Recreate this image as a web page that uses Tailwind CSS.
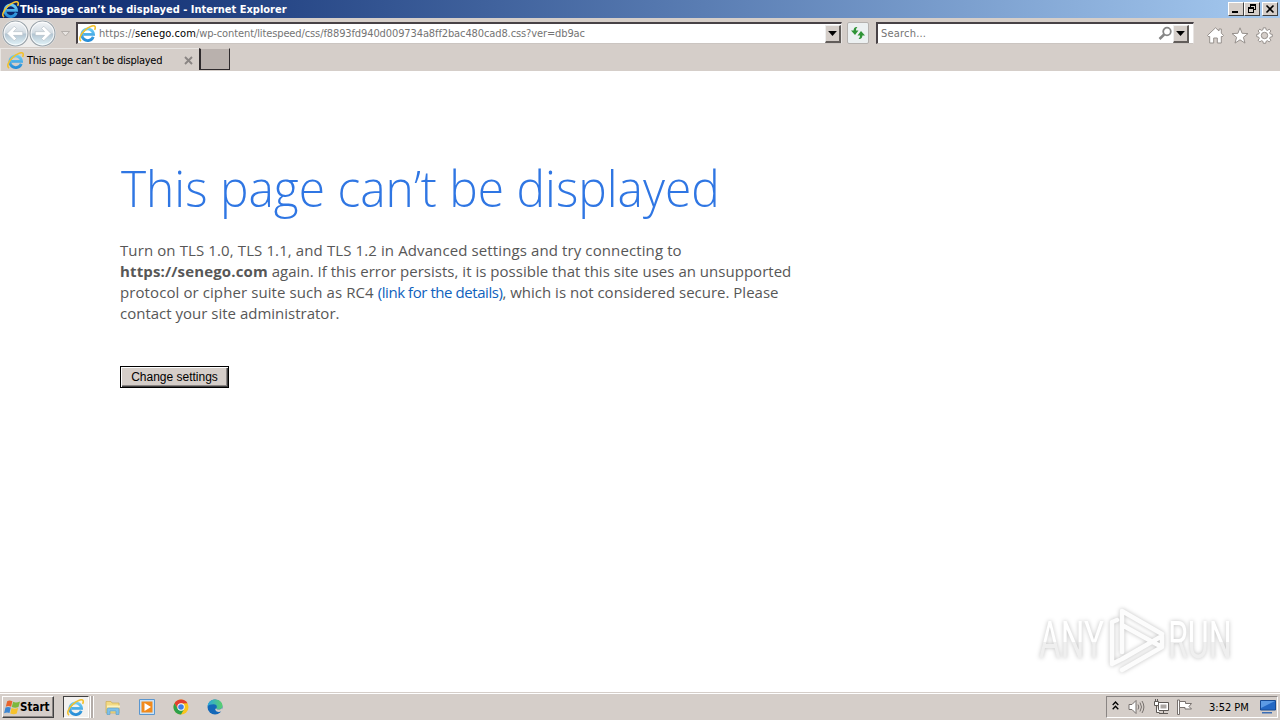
<!DOCTYPE html>
<html lang="en">
<head>
<meta charset="utf-8">
<title>This page can’t be displayed</title>
<script src="https://cdn.jsdelivr.net/npm/@tailwindcss/browser@4"></script>
</head>
<body class="w-[1280px] h-[720px] overflow-hidden flex flex-col bg-white font-['DejaVu_Sans_Condensed','DejaVu_Sans',sans-serif] text-[11px] text-black">
<svg class="absolute w-0 h-0">
  <defs>
    <linearGradient id="ieb" gradientUnits="userSpaceOnUse" x1="0" y1="3" x2="0" y2="14"><stop offset="0" stop-color="#6fd0f7"/><stop offset="1" stop-color="#2a8fd8"/></linearGradient>
    <linearGradient id="glass" x1="0" y1="0" x2="0" y2="1"><stop offset="0" stop-color="#f4f6f8"/><stop offset=".48" stop-color="#d3dce3"/><stop offset=".52" stop-color="#b3c5d2"/><stop offset="1" stop-color="#e4f5fa"/></linearGradient>
    <symbol id="ie" viewBox="0 0 16 16">
      <path d="M13.400 11A5.500 5.500 0 1 1 13.700 8.800H4.200" fill="none" stroke="url(#ieb)" stroke-width="2.600"/>
      <path d="M2 15C-.8 14 1.400 8.600 5.400 5 9.400 1.200 14.400-.4 15.200 1.600c.3.900 0 2-.5 2.900" fill="none" stroke="#f2c12e" stroke-width="1.500"/>
    </symbol>
    <symbol id="navarrow" viewBox="0 0 26 26">
      <circle cx="13" cy="13" r="12" fill="url(#glass)" stroke="#98a1a8" stroke-width="1.100"/>
      <circle cx="13" cy="13" r="10.900" fill="none" stroke="#fff" stroke-opacity=".8"/>
      <path d="M4.800 13l7-7 2.200 2.200-3 3h9v3.600h-9l3 3-2.200 2.200z" fill="#fff" stroke="#b4bec6" stroke-width=".6"/>
    </symbol>
  </defs>
</svg>

<header class="h-[71px] shrink-0 bg-[#d5cec9] flex flex-col">
  <div class="h-[18px] shrink-0 flex items-center bg-linear-to-r from-[#0a246a] to-[#a6caf0] pl-[2px] pr-[2px]">
    <svg class="w-[17px] h-[17px] shrink-0"><use href="#ie"/></svg>
    <span class="ml-px mt-px font-bold text-white whitespace-nowrap leading-[17px]">This page can’t be displayed - Internet Explorer</span>
    <div class="ml-auto flex">
      <div class="w-[16px] h-[14px] bg-[#d5cec9] border border-t-white border-l-white border-r-[#404040] border-b-[#404040]"><svg class="w-[14px] h-3" viewBox="0 0 14 12"><path d="M3 8h6v2H3z"/></svg></div>
      <div class="w-[16px] h-[14px] bg-[#d5cec9] border border-t-white border-l-white border-r-[#404040] border-b-[#404040]"><svg class="w-[14px] h-3" viewBox="0 0 14 12" shape-rendering="crispEdges"><path d="M5 1h6v6H9V6h1V3H6v1H5zM3 4h6v6H3zM4 6v3h4V6z" fill-rule="evenodd"/></svg></div>
      <div class="ml-[2px] w-[16px] h-[14px] bg-[#d5cec9] border border-t-white border-l-white border-r-[#404040] border-b-[#404040]"><svg class="w-[14px] h-3" viewBox="0 0 14 12"><path d="M3.500 2.500l7 7M10.500 2.500l-7 7" stroke="#000" stroke-width="1.600"/></svg></div>
    </div>
  </div>

  <div class="h-[30px] shrink-0 flex items-start pl-[2px]">
    <div class="w-[54px] h-[27px] mt-[2px] flex rounded-full bg-[#eeedec]">
      <svg class="w-[27px] h-[27px]"><use href="#navarrow"/></svg>
      <svg class="w-[27px] h-[27px] -scale-x-100"><use href="#navarrow"/></svg>
    </div>
    <svg class="w-[9px] h-[6px] ml-[5px] mt-[13px]" viewBox="0 0 9 6"><path d="M.5.500h8l-4 4.500z" fill="#e8e4e1" stroke="#aaa4a0" stroke-width=".8"/></svg>
    <div class="ml-[6px] mt-[4px] w-[766px] h-[22px] bg-white border-t-2 border-l-2 border-t-[#484246] border-l-[#484246] border-r border-b border-r-[#e8e4e2] border-b-[#cbc5c1] flex items-center">
      <svg class="ml-px w-[17px] h-[17px] shrink-0"><use href="#ie"/></svg>
      <span class="ml-[3px] mt-[2px] text-[#747474] whitespace-nowrap tracking-[-0.11px]"><span class="tracking-[0.05px]">https://<span class="text-black tracking-[0.1px]">senego.com</span></span>/wp-content/litespeed/css/f8893fd940d009734a8ff2bac480cad8.css?ver=db9ac</span>
      <div class="ml-auto w-[16px] h-[18px] bg-[#d5cec9] border border-t-[#eee] border-l-[#eee] border-r-2 border-b-2 border-r-[#625d5a] border-b-[#625d5a] flex items-center justify-center"><svg class="w-[9px] h-[5px]" viewBox="0 0 7 4"><path d="M0 0h7L3.500 4z"/></svg></div>
    </div>
    <div class="ml-[5px] mt-[4px] w-[22px] h-[22px] rounded-[2px] border border-[#b5b1ae] bg-[#ecf0f1] flex items-center justify-center">
      <svg class="w-4 h-4" viewBox="0 0 16 16" fill="#2f9436"><path d="M6.800 2C4.500 2.200 3.600 3.500 3.600 5.500H1L5 10l3.500-4.500H6C6 4 6.300 3.200 7.400 2.600z"/><path d="M9.200 14c2.300-.2 3.200-1.500 3.200-3.500H15L11 6 7.500 10.500H10c0 1.500-.3 2.300-1.400 2.900z"/></svg>
    </div>
    <div class="ml-[7px] mt-[4px] w-[318px] h-[22px] bg-white border-t-2 border-l-2 border-t-[#484246] border-l-[#484246] border-r border-b border-r-[#e8e4e2] border-b-[#cbc5c1] flex items-center">
      <span class="ml-[3px] mt-[2px] text-[#747474] tracking-[0.2px]">Search...</span>
      <svg class="ml-auto w-[15px] h-[15px]" viewBox="0 0 15 15" fill="none" stroke="#868686"><circle cx="9" cy="5.500" r="3.800" stroke-width="1.800"/><path d="M6.200 8.500L1.500 13" stroke-width="2.600"/></svg>
      <div class="mr-[4px] w-[16px] h-[18px] bg-[#d5cec9] border border-t-[#eee] border-l-[#eee] border-r-2 border-b-2 border-r-[#625d5a] border-b-[#625d5a] flex items-center justify-center"><svg class="w-[9px] h-[5px]" viewBox="0 0 7 4"><path d="M0 0h7L3.500 4z"/></svg></div>
    </div>
    <div class="ml-[13px] mt-[9px] flex gap-[7px]">
      <svg class="w-[17px] h-[17px]" viewBox="0 0 17 17" fill="#fff" stroke="#96908c"><path d="M8.500.800L12 4V2h2.300v4.200L16.500 8.400 15 10l-.7-.6V16h-4v-5H6.700v5h-4V9.400L2 10 .5 8.400z"/></svg>
      <svg class="w-[18px] h-[17px]" viewBox="0 0 18 17" fill="#fff" stroke="#96908c"><path d="M9 .800l2.100 5.500 5.900.3-4.600 3.700 1.600 5.800-5-3.300-5 3.300 1.600-5.800L1 6.600l5.900-.3z"/></svg>
      <svg class="w-[17px] h-[17px]" viewBox="0 0 17 17" fill="#fff" stroke="#96908c"><path fill-rule="evenodd" d="M7.300.800h2.400l.4 2 1.400.6 1.700-1.200 1.700 1.700-1.200 1.700.6 1.400 2 .4v2.300l-2 .4-.6 1.400 1.200 1.700-1.700 1.700-1.700-1.200-1.400.6-.4 2H7.300l-.4-2-1.400-.6-1.700 1.200-1.700-1.700 1.200-1.700-.6-1.400-2-.4V7.400l2-.4.6-1.400-1.200-1.700 1.700-1.700 1.700 1.200 1.400-.6zM8.500 5.300a3.200 3.200 0 1 0 0 6.400 3.200 3.200 0 0 0 0-6.400z"/></svg>
    </div>
  </div>

  <div class="h-[23px] flex items-start">
    <div class="w-[199px] h-[23px] flex items-center border-l border-t border-[#e9e6e3] pl-[6px]">
      <svg class="w-[17px] h-[17px] shrink-0"><use href="#ie"/></svg>
      <span class="ml-[3px] mt-[2px] whitespace-nowrap tracking-[-0.25px]">This page can’t be displayed</span>
      <svg class="ml-auto mr-[6px] w-[9px] h-[9px]" viewBox="0 0 9 9"><path d="M1 1l7 7M8 1L1 8" stroke="#8a8583" stroke-width="1.900"/></svg>
    </div>
    <div class="w-[31px] h-[22px] border-l-2 border-r border-b border-[#2e2a2c] bg-[#b9b1ad] border-t border-t-[#d5cec9]"></div>
  </div>
</header>

<main class="h-[621px] shrink-0 pl-[120px] relative font-['Open_Sans','Noto_Sans',sans-serif]">
  <h1 class="pt-[82px] h-[169px] leading-[70px] text-[50px] font-light text-[#2f76e3] whitespace-nowrap"><span class="inline-block origin-left scale-x-[0.958] pl-px">This page can’t be displayed</span></h1>
  <div class="text-[15px] leading-[21px] text-[#575757] whitespace-nowrap flex flex-col items-start">
    <p class="tracking-[0.11px]">Turn on TLS 1.0, TLS 1.1, and TLS 1.2 in Advanced settings and try connecting to</p>
    <p class="tracking-[0.02px]"><b class="tracking-[0.14px]">https://senego.com</b> again. If this error persists, it is possible that this site uses an unsupported</p>
    <p><span class="tracking-[0.09px]">protocol or cipher suite such as RC4 </span><span class="tracking-[-0.44px] text-[#0f62bd]">(link for the details)</span>, which is not considered secure. Please</p>
    <p>contact your site administrator.</p>
  </div>
  <button class="mt-[42px] w-[109px] h-[22px] border border-black bg-[#d5cec9] font-['Liberation_Sans',sans-serif] text-[12px] leading-[18px] text-black shadow-[inset_1px_1px_0_#fff,inset_-1px_-1px_0_#404040,inset_-2px_-2px_0_#8a8583]">Change settings</button>
  <div class="absolute left-[1039px] top-[534px] w-[196px] h-[72px] flex items-center font-['Roboto',sans-serif] text-[52px] leading-[60px] drop-shadow-[0_0_2px_rgba(0,0,0,0.25)]">
    <div class="w-[65px] shrink-0"><span class="inline-block origin-left scale-x-[0.64] bg-linear-to-b from-white from-52% to-[#efefef] to-52% bg-clip-text text-transparent">ANY</span></div>
    <svg class="w-[64px] h-[72px] shrink-0" viewBox="0 0 64 72" fill="none" stroke="#fcfcfc" stroke-width="4.500" stroke-linejoin="round" stroke-linecap="round">
      <path d="M13 15l-5 2v42l8-4M18 47V6l40 23M18 20l38 21M18 65l40-23V31L18 54"/>
    </svg>
    <div class="w-[65px] shrink-0"><span class="inline-block origin-left scale-x-[0.62] bg-linear-to-b from-white from-52% to-[#efefef] to-52% bg-clip-text text-transparent">RUN</span></div>
  </div>
</main>

<footer class="h-[28px] shrink-0 bg-[#d5cec9] border-t border-[#d5cec9] flex items-start shadow-[inset_0_1px_0_#fff]">
  <div class="ml-[2px] mt-[3px] w-[52px] h-[22px] border border-t-white border-l-white border-r-[#404040] border-b-[#404040] shadow-[inset_-1px_-1px_0_#8a8583] flex items-center pl-px">
    <svg class="w-[17px] h-[17px] shrink-0" viewBox="0 0 16 16"><path d="M3 2c2-1 3.400-.5 4.900.2L6.700 7.400C5 6.600 3.600 6.400 1.700 7.200z" fill="#e8642c"/><path d="M8.600 2.700c1.800.8 3.800.8 6.500-.4l-1.500 5.200c-2 1-4.200.9-6.300.1z" fill="#7cb83c"/><path d="M1.400 8c1.900-.8 3.500-.6 5 .1L5.200 13.200C3.700 12.500 2.100 12.500.1 13.300z" fill="#3c86d2"/><path d="M7.100 8.500c1.900.8 4.100.8 6.200-.1L12 13.600c-2 1-4 .8-6.100 0z" fill="#f6c22c"/></svg>
    <span class="-ml-px mt-px text-[11.500px] font-bold">Start</span>
  </div>
  <div class="ml-[9px] mt-[3px] w-[26px] h-[22px] bg-[#f3f1ef] border border-t-[#404040] border-l-[#404040] border-r-white border-b-white flex items-center justify-center pr-[2px]"><svg class="w-[17px] h-[17px]"><use href="#ie"/></svg></div>
  <div class="ml-px mt-[3px] w-[4px] h-[22px] border-x border-x-white bg-[#b3aca8]"></div>
  <svg class="ml-[11px] mt-[7px] w-4 h-4" viewBox="0 0 16 16"><path d="M1 1.500h5l1 1.500h7v10H1z" fill="#f3da83" stroke="#cfae52" stroke-width=".7"/><path d="M2 5.500h13v2H2z" fill="#fdf2bd"/><path d="M2 14.500V9.500Q2 8 3.500 8h9Q14 8 14 9.500v5h-3V11H5v3.500z" fill="#7fc0e8" stroke="#569cc8" stroke-width=".6"/></svg>
  <svg class="ml-[18px] mt-[6px] w-4 h-4" viewBox="0 0 16 16"><path d="M.5.500h15v15H.5z" fill="#c8e2f8" stroke="#5a96cf"/><path d="M2.500 2.500h11v11h-11z" fill="#f18a1c"/><path d="M5.500 4L12 8l-6.500 4z" fill="#fff"/></svg>
  <svg class="ml-[18px] mt-[6px] w-4 h-4" viewBox="0 0 16 16"><circle cx="8" cy="8" r="7.500" fill="#f9c51c"/><path d="M1.500 4.250A7.500 7.500 0 0 1 14.500 4.250L8 4.500 4.750 9.900z" fill="#e23e30"/><path d="M1.500 4.250A7.500 7.500 0 0 0 8 15.500l3.300-5.700H4.700z" fill="#2da14b"/><circle cx="8" cy="8" r="3.700" fill="#fff"/><circle cx="8" cy="8" r="2.800" fill="#3f7fe6"/></svg>
  <svg class="ml-[18px] mt-[6px] w-4 h-4" viewBox="0 0 16 16"><defs><linearGradient id="edg" x1="0" y1="0" x2="1" y2="0"><stop offset="0" stop-color="#2ba6e0"/><stop offset="1" stop-color="#5ad06c"/></linearGradient></defs><circle cx="8" cy="8" r="7.500" fill="#1468b8"/><path d="M.5 7.500C1 3 4.200.500 8 .500c4.500 0 7.500 3 7.500 6.300 0 2.500-2 3.700-4 3.700-1.700 0-2.300-.6-2-1.300.7-1 .6-3.800-2.600-3.900C4.200 5.200 1.500 6 .5 7.500z" fill="url(#edg)"/><path d="M9.500 9.200c-.3.700.3 1.300 2 1.300 1.300 0 2.600-.5 3.400-1.500L16 12l-1.600.3c-2.500 1.500-6.200.5-6.200-2.300z" fill="#d5cec9"/></svg>

  <div class="ml-auto mr-[2px] mt-[3px] w-[172px] h-[22px] border border-t-[#8a8583] border-l-[#8a8583] border-r-white border-b-white flex items-center">
    <svg class="ml-[5px] mb-[3px] w-[7px] h-[9px]" viewBox="0 0 7 9" fill="none" stroke="#000" stroke-width="1.300"><path d="M.7 4l2.800-3 2.800 3M.7 8.300l2.800-3 2.800 3"/></svg>
    <svg class="ml-[9px] w-[17px] h-4" viewBox="0 0 17 16" fill="none" stroke="#77716e"><path d="M1 5.500h3l4-4v13l-4-4H1z" fill="#fff"/><path d="M10 5.500q1.600 2.500 0 5M12 3.500q3 4.500 0 9M14 2q3.800 6 0 12"/></svg>
    <svg class="ml-[8px] w-[17px] h-4" viewBox="0 0 17 16" fill="#fff" stroke="#5d5855"><path d="M5.500 3.500h10v8h-10z"/><path d="M7.500 5.500h6v4h-6z" fill="#aaa5a2" stroke="none"/><path d="M6 14.500h9M10.500 11.500v3"/><path d="M1.500 2.500h4v4h-4zM2.500 0v2.500M4.500 0v2.500M3.500 6.500v7h3"/></svg>
    <svg class="ml-[6px] w-[17px] h-4" viewBox="0 0 17 16" fill="#fff" stroke="#77716e"><path d="M1.500 1v14.500h2V1z"/><path d="M3.500 2.500h6v2h6l-2.500 3 2.500 2.500H9V8.500H3.500z"/></svg>
    <span class="ml-[16px] mt-[2px] whitespace-nowrap">3:52 PM</span>
    <svg class="ml-auto mr-px w-[16px] h-[14px]" viewBox="0 0 16 14"><path d="M.5.500h15v9.500H.5z" fill="#2468c4" stroke="#174a94"/><path d="M1 1h14L1 8z" fill="#5d9be4"/><path d="M2 12h10v1.500H2z" fill="#3a6db4"/></svg>
  </div>
</footer>
</body>
</html>
